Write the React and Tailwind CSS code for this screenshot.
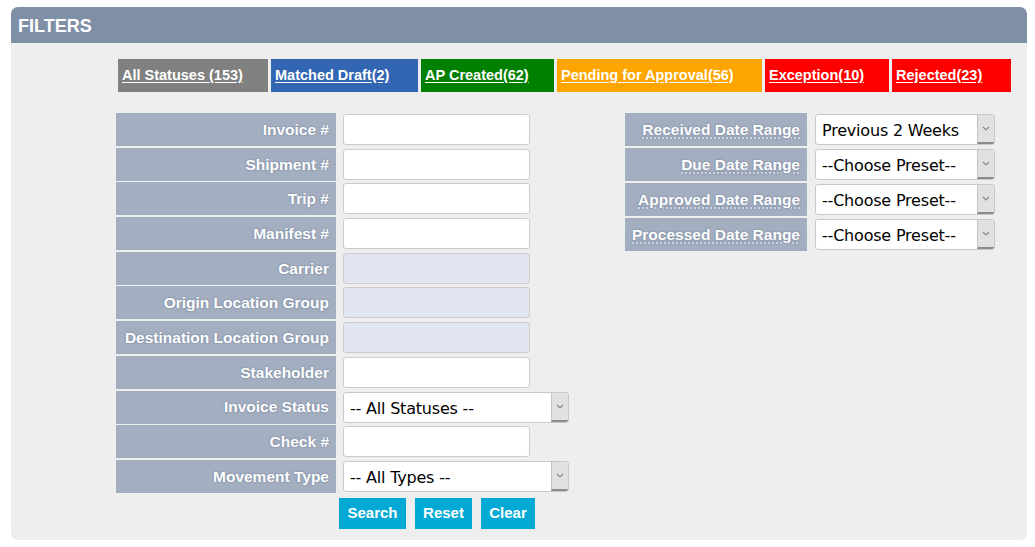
import React from 'react';

const tabs = [
  { label: 'All Statuses ', count: '(153)', bg: 'bg-[#808080]', w: 'w-[150px]' },
  { label: 'Matched Draft', count: '(2)', bg: 'bg-[#3265b2]', w: 'w-[147px]' },
  { label: 'AP Created', count: '(62)', bg: 'bg-[#008000]', w: 'w-[133px]' },
  { label: 'Pending for Approval', count: '(56)', bg: 'bg-[#ffa500]', w: 'w-[205px]' },
  { label: 'Exception', count: '(10)', bg: 'bg-[#ff0000]', w: 'w-[124px]' },
  { label: 'Rejected', count: '(23)', bg: 'bg-[#ff0000]', w: 'w-[119px]' },
];

const leftRows = [
  { label: 'Invoice #', type: 'text' },
  { label: 'Shipment #', type: 'text' },
  { label: 'Trip #', type: 'text' },
  { label: 'Manifest #', type: 'text' },
  { label: 'Carrier', type: 'disabled' },
  { label: 'Origin Location Group', type: 'disabled' },
  { label: 'Destination Location Group', type: 'disabled' },
  { label: 'Stakeholder', type: 'text' },
  { label: 'Invoice Status', type: 'select', value: '-- All Statuses --' },
  { label: 'Check #', type: 'text' },
  { label: 'Movement Type', type: 'select', value: '-- All Types --' },
];

const rightRows = [
  { label: 'Received Date Range', value: 'Previous 2 Weeks' },
  { label: 'Due Date Range', value: '--Choose Preset--' },
  { label: 'Approved Date Range', value: '--Choose Preset--' },
  { label: 'Processed Date Range', value: '--Choose Preset--' },
];

const labelCls =
  "flex items-center justify-end pr-[7px] bg-[#a3aec0] text-white font-bold text-[15.5px] [text-shadow:0_0_2px_#6a7890] whitespace-nowrap";

function FakeSelect({ value, width }) {
  return (
    <div className={`flex h-[31px] ${width} bg-white border border-[#c8c8c8] rounded-[3px] overflow-hidden`}>
      <div className="flex-1 flex items-center pl-[6px] pt-[3px] text-[16px] text-black font-['DejaVu_Sans',sans-serif] tracking-[-0.2px] whitespace-nowrap overflow-hidden">
        {value}
      </div>
      <div className="w-[17px] flex items-center justify-center bg-[#e1e1e1] border-l border-[#c4c4c4] border-b-2 border-b-[#8a8a8a]">
        <svg width="8" height="5" viewBox="0 0 8 5">
          <path d="M1 1 L4 4 L7 1" fill="none" stroke="#888" strokeWidth="1.2" />
        </svg>
      </div>
    </div>
  );
}

export default function App() {
  return (
    <div className="w-[1035px] h-[547px] bg-white pt-[7px] px-[11px] font-['Liberation_Sans',Arial,sans-serif]">
      <div className="w-[1016px] h-[533px] bg-[#eeeeee] rounded-[7px] overflow-hidden">
        {/* header */}
        <div className="h-[36px] bg-[#7f8fa6] flex items-center pl-[7px] pt-[2px]">
          <span className="text-white font-bold text-[18px]">FILTERS</span>
        </div>

        {/* status tabs */}
        <div className="flex gap-[3px] pl-[107px] mt-[16px]">
          {tabs.map((t) => (
            <div key={t.label} className={`${t.bg} ${t.w} h-[33px] flex items-center pl-[4px] text-white font-bold text-[14.5px] underline underline-offset-2 whitespace-nowrap`}>
              {t.label}{t.count}
            </div>
          ))}
        </div>

        <div className="flex mt-[21px] pl-[105px]">
          {/* left column */}
          <div className="flex flex-col">
            <div className="flex flex-col gap-[1.7px]">
              {leftRows.map((r) => (
                <div key={r.label} className="flex items-center h-[33px]">
                  <div className={`${labelCls} w-[220px] h-full`}>{r.label}</div>
                  <div className="ml-[7px]">
                    {r.type === 'text' && (
                      <div className="w-[187px] h-[31px] bg-white border border-[#cccccc] rounded-[3px]" />
                    )}
                    {r.type === 'disabled' && (
                      <div className="w-[187px] h-[31px] bg-[#e2e6f3] border border-[#cccccc] rounded-[3px]" />
                    )}
                    {r.type === 'select' && <FakeSelect value={r.value} width="w-[226px]" />}
                  </div>
                </div>
              ))}
            </div>
            <div className="flex gap-[9px] ml-[223px] mt-[5px]">
              <button className="h-[31px] w-[67px] bg-[#02a9d4] text-white font-bold text-[15px]">Search</button>
              <button className="h-[31px] w-[57px] bg-[#02a9d4] text-white font-bold text-[15px]">Reset</button>
              <button className="h-[31px] w-[54px] bg-[#02a9d4] text-white font-bold text-[15px]">Clear</button>
            </div>
          </div>

          {/* right column */}
          <div className="flex flex-col gap-[2px] ml-[56px]">
            {rightRows.map((r) => (
              <div key={r.label} className="flex items-center h-[33px]">
                <div className={`${labelCls} w-[182px] h-full`}>
                  <span className="underline decoration-dotted decoration-[#dfe3ea] underline-offset-[3px]">{r.label}</span>
                </div>
                <div className="ml-[8px]">
                  <FakeSelect value={r.value} width="w-[180px]" />
                </div>
              </div>
            ))}
          </div>
        </div>
      </div>
    </div>
  );
}
